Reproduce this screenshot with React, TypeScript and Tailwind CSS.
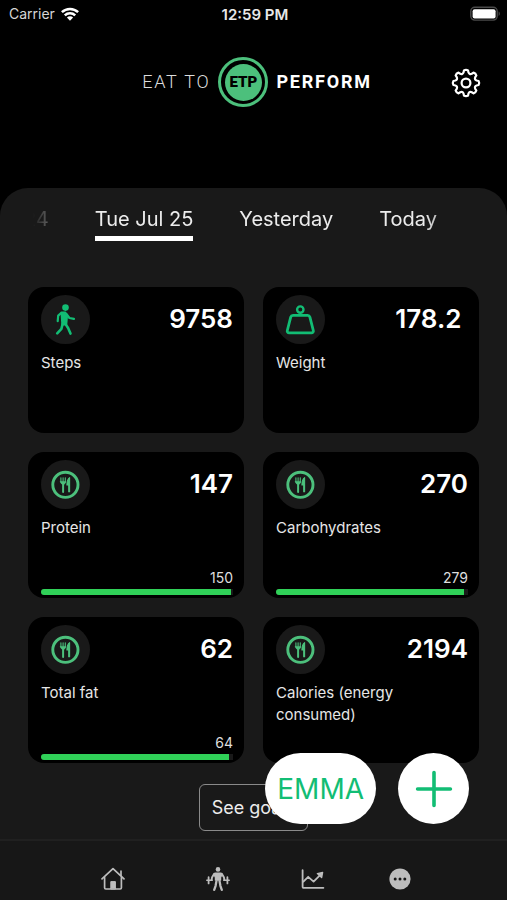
import React, { useState } from 'react';

type IconName = 'walk' | 'weight' | 'food';

interface Metric {
  label: string;
  value: string;
  icon: IconName;
  goal?: number;
  progress?: number;
}

const days = ['Mon Jul 24', 'Tue Jul 25', 'Yesterday', 'Today'];

const metrics: Metric[] = [
  { label: 'Steps', value: '9758', icon: 'walk' },
  { label: 'Weight', value: '178.2\u00a0', icon: 'weight' },
  { label: 'Protein', value: '147', icon: 'food', goal: 150, progress: 99 },
  { label: 'Carbohydrates', value: '270', icon: 'food', goal: 279, progress: 98 },
  { label: 'Total fat', value: '62', icon: 'food', goal: 64, progress: 98 },
  { label: 'Calories (energy consumed)', value: '2194', icon: 'food' },
];

const WalkIcon = () => (
  <svg className="size-[49px]" viewBox="0 0 49 49" fill="none" stroke="#12bd74" strokeLinecap="round" strokeLinejoin="round">
    <circle cx="24.5" cy="12.6" r="3.3" fill="#12bd74" stroke="none" />
    <path d="M20.4 17.4h4l1.8 2.8-.8 9.2-4.2.4z" fill="#12bd74" strokeWidth="1.8" />
    <path d="M20 18.2l-2.8 2.4-.5 5.6" strokeWidth="2.2" />
    <path d="M25.6 19.2l2.8 3.8 4.6.8" strokeWidth="2.2" />
    <path d="M24.2 28.6l2.9 4.4 2.4 5.6M21.6 29l-1.2 4.9-4.2 4.4" strokeWidth="2.6" />
  </svg>
);

const WeightIcon = () => (
  <svg className="size-[49px]" viewBox="0 0 49 49" fill="none" stroke="#12bd74" strokeWidth="2.8" strokeLinejoin="round">
    <circle cx="24.3" cy="14.6" r="3.2" strokeWidth="2.4" />
    <path d="M17 20.4h14.6a2.4 2.4 0 0 1 2.3 1.7l3.4 13.4a1.9 1.9 0 0 1-1.8 2.4H13.1a1.9 1.9 0 0 1-1.8-2.4l3.4-13.4a2.4 2.4 0 0 1 2.3-1.7z" />
  </svg>
);

const FoodIcon = () => (
  <svg className="size-[49px]" viewBox="0 0 49 49" fill="none" stroke="#4cc07c" strokeLinecap="round" strokeLinejoin="round">
    <circle cx="24.4" cy="24.8" r="12.6" strokeWidth="2.9" />
    <path d="M19.9 17.8v4.4M22.1 17.8v4.4M24.3 17.8v4.4" strokeWidth="1.1" />
    <path d="M19.6 21.4h5c0 2-1 3-2.5 3s-2.5-1-2.5-3z" fill="#4cc07c" strokeWidth=".6" />
    <path d="M22.1 24v8" strokeWidth="2" />
    <path d="M28.6 17.6c-2 1.4-2.7 4-2.7 7.4h1.8v6.8h.9z" fill="#4cc07c" strokeWidth="1.1" />
  </svg>
);

const icons: Record<IconName, React.FC> = { walk: WalkIcon, weight: WeightIcon, food: FoodIcon };

const GearIcon = () => {
  const point = (deg: number, r: number) => {
    const a = (deg * Math.PI) / 180;
    return `${(16 + r * Math.sin(a)).toFixed(2)} ${(16 - r * Math.cos(a)).toFixed(2)}`;
  };
  const teeth = [0, 45, 90, 135, 180, 225, 270, 315].map(
    (deg, i) =>
      `${i === 0 ? 'M' : 'L'}${point(deg - 9, 12.8)} Q${point(deg, 13.8)} ${point(deg + 9, 12.8)} L${point(deg + 13, 10.9)} Q${point(deg + 22.5, 8.9)} ${point(deg + 32, 10.9)}`
  );
  return (
    <svg className="size-8" viewBox="0 0 32 32" fill="none" stroke="white" strokeWidth="2.2" strokeLinejoin="round">
      <path d={`${teeth.join(' ')}Z`} />
      <circle cx="16" cy="16" r="4.4" />
    </svg>
  );
};

const StatusBar = () => (
  <div className="grid h-7 grid-cols-3 items-center pl-[9px] pr-[6px] text-[14px] leading-none">
    <div className="flex items-center gap-[6px] text-[#d6d6d6]">
      <span>Carrier</span>
      <svg className="h-[14px] w-[18px]" viewBox="0 0 18 14" fill="none" stroke="white" strokeWidth="2.5">
        <path d="M.9 5.2a11.6 11.6 0 0 1 16.2 0M3.8 8.3a7.4 7.4 0 0 1 10.4 0" />
        <path d="M9 13.8l-3.1-3.3a4.4 4.4 0 0 1 6.2 0z" fill="white" stroke="none" />
      </svg>
    </div>
    <span className="text-center text-[15px] font-semibold text-[#e8e8e8]">12:59 PM</span>
    <svg className="h-4 w-[31px] justify-self-end" viewBox="0 0 31 16">
      <rect x=".8" y="1.3" width="26.4" height="12.8" rx="4" fill="none" stroke="#4a4a4a" strokeWidth="1.4" />
      <rect x="2.6" y="3.2" width="23" height="9.2" rx="2" fill="white" />
      <path d="M28.6 5.6c1.6.4 1.6 4 0 4.4z" fill="#4a4a4a" />
    </svg>
  </div>
);

const Logo = () => (
  <h1 className="flex items-center gap-2 font-[Roboto,sans-serif] text-[18px] leading-none tracking-widest">
    <span className="font-light text-[#dcdcdc]">EAT TO</span>
    <span className="flex size-[50px] items-center justify-center rounded-full border-[3px] border-[#4cc07c]">
      <span className="flex size-[37px] items-center justify-center rounded-full bg-[#4cc07c] text-[15px] font-black tracking-normal text-black">
        ETP
      </span>
    </span>
    <span className="font-bold">PERFORM</span>
  </h1>
);

const MetricCard: React.FC<{ metric: Metric }> = ({ metric }) => {
  const Icon = icons[metric.icon];
  return (
    <article className="flex h-[146px] flex-col overflow-hidden rounded-2xl bg-black pb-[3px] pl-[13px] pr-[11px] pt-2">
      <div className="flex items-start justify-between">
        <div className="flex size-[49px] shrink-0 items-center justify-center rounded-full bg-[#191919]">
          <Icon />
        </div>
        <span className="text-[26px] font-semibold leading-[47px]">{metric.value}</span>
      </div>
      <h2 className="mt-2 text-[15px] leading-[22px] text-[#e6e6e6]">{metric.label}</h2>
      {metric.goal && (
        <div className="mt-auto">
          <div className="text-right text-[14px] leading-[22px] text-[#dedede]">{metric.goal}</div>
          <div className="h-[6px] overflow-hidden rounded-l-full bg-[#191919]">
            <div className="h-full bg-[#30d158]" style={{ width: `${metric.progress}%` }} />
          </div>
        </div>
      )}
    </article>
  );
};

const TabBar = () => (
  <nav className="sticky bottom-0 grid h-[61px] grid-cols-[106fr_104fr_84fr_90fr] items-center justify-items-center border-t-2 border-[#202020] bg-[#171717] pl-[60px] pr-[62px] pt-4 text-[#bdbdbd]">
    <a href="#home" aria-label="Home">
      <svg className="size-6" viewBox="0 0 24 24" fill="none" stroke="currentColor" strokeWidth="1.7" strokeLinecap="round" strokeLinejoin="round">
        <path d="M1 11.8L12 1.6l11 10.2" />
        <path d="M3.6 10.6v10.2a1.2 1.2 0 0 0 1.2 1.2h14.4a1.2 1.2 0 0 0 1.2-1.2V10.6M20 8.4V4.2" />
        <path d="M9.8 21.6v-7h4.6v7z" fill="currentColor" strokeWidth="1" />
      </svg>
    </a>
    <a href="#workouts" aria-label="Workouts">
      <svg className="size-6" viewBox="0 0 24 24" fill="none" stroke="currentColor" strokeLinecap="round" strokeLinejoin="round">
        <circle cx="12" cy="2.4" r="2.3" fill="currentColor" stroke="none" />
        <path d="M9 6h6l1 1.4-1.4 3.2v2.6H9.4v-2.6L8 7.4z" fill="currentColor" strokeWidth="1.2" />
        <path d="M8.2 6.8l-2.2 3.8-.4 2.4M15.8 6.8l2.2 3.8.4 2.4" strokeWidth="1.9" />
        <path d="M.8 13.2h5.4M17.8 13.2h5.4" strokeWidth="1.5" />
        <path d="M2.6 10.2v6.2M21.4 10.2v6.2" strokeWidth="1.8" />
        <path d="M10.4 14.4l-.8 4.4-1.4 4M13.6 14.4l.8 4.4 1.4 4" strokeWidth="2.3" />
      </svg>
    </a>
    <a href="#trends" aria-label="Trends">
      <svg className="size-6" viewBox="0 0 24 24" fill="none" stroke="currentColor" strokeWidth="1.8" strokeLinecap="round" strokeLinejoin="round">
        <path d="M1.6 3.2v16.6a1 1 0 0 0 1 1H22.4" />
        <path d="M2.4 14.6l4.8-4.8 5.4 4.8 7-7" />
        <path d="M16.4 6.6l5.2-1.2-1 5.2z" fill="currentColor" strokeWidth="1.4" />
      </svg>
    </a>
    <a href="#more" aria-label="More">
      <svg className="size-6" viewBox="0 0 24 24">
        <circle cx="12" cy="12" r="10.6" fill="currentColor" />
        <circle cx="7.2" cy="12" r="1.5" fill="#171717" />
        <circle cx="12" cy="12" r="1.5" fill="#171717" />
        <circle cx="16.8" cy="12" r="1.5" fill="#171717" />
      </svg>
    </a>
  </nav>
);

const App: React.FC = () => {
  const [selectedDay, setSelectedDay] = useState('Tue Jul 25');

  return (
    <div className="flex min-h-screen flex-col bg-black font-[Inter,sans-serif] text-white">
      <StatusBar />
      <header className="grid h-40 grid-cols-[1fr_auto_1fr] items-start pl-8 pr-[25px] pt-[29px]">
        <div />
        <Logo />
        <button type="button" aria-label="Settings" className="mt-[10px] justify-self-end">
          <GearIcon />
        </button>
      </header>

      <main className="flex flex-1 flex-col rounded-t-[28px] bg-[#191919] px-7 pb-2 pt-[18px]">
        <div className="flex justify-end gap-[46px] overflow-hidden pr-[42px] [mask-image:linear-gradient(to_right,transparent_5px,black_50px,black_calc(100%-55px),transparent)]">
          {days.map(day => (
            <button
              key={day}
              type="button"
              onClick={() => setSelectedDay(day)}
              className={`shrink-0 border-b-[5px] pb-[3px] text-[20px] leading-[27px] text-[#ececec] ${selectedDay === day ? 'border-white' : 'border-transparent'}`}
            >
              {day}
            </button>
          ))}
        </div>

        <div className="mt-[46px] grid grid-cols-2 gap-[19px]">
          {metrics.map(metric => (
            <MetricCard key={metric.label} metric={metric} />
          ))}
        </div>

        <button type="button" className="mt-[21px] h-[47px] self-center rounded-md border border-[#8a8a8a] px-3 text-[18px] text-[#ececec]">
          See goals
        </button>
      </main>

      <TabBar />

      <div className="fixed bottom-[76px] right-[38px] flex gap-[22px]">
        <button type="button" className="h-[71px] rounded-full bg-white px-3 text-[28px] text-[#12bd74]">
          EMMA
        </button>
        <button type="button" aria-label="Add" className="flex size-[71px] items-center justify-center rounded-full bg-white">
          <svg className="size-10" viewBox="0 0 40 40" stroke="#12bd74" strokeWidth="3.6" strokeLinecap="round">
            <path d="M20 3.6v32.8M3.6 20h32.8" />
          </svg>
        </button>
      </div>
    </div>
  );
};

export default App;
